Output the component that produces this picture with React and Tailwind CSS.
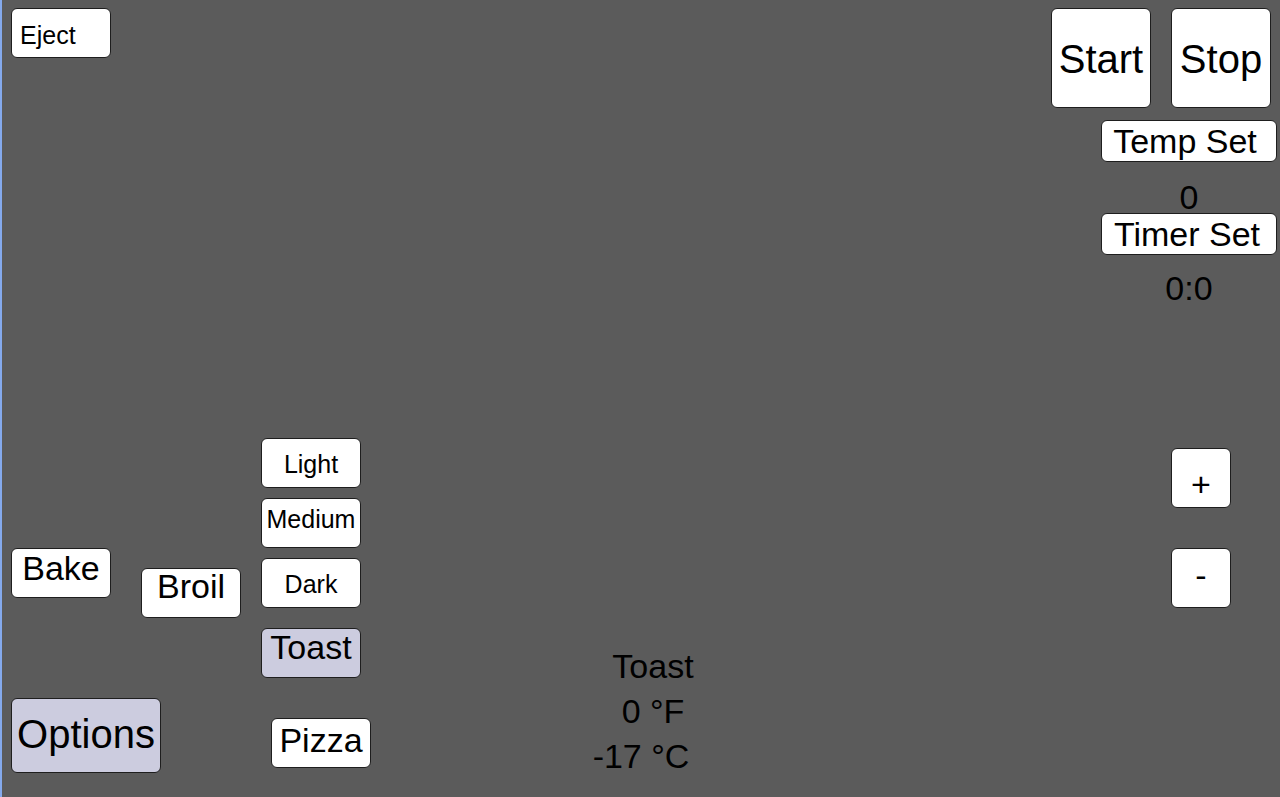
import React from "react";

const Btn = ({ className = "", children }) => (
  <button
    className={`flex shrink-0 justify-center items-start border border-[#1e1e1e] rounded-[6px] text-black ${className}`}
  >
    <span className="whitespace-nowrap">{children}</span>
  </button>
);

const App = () => {
  return (
    <div className="flex h-[797px] w-full overflow-hidden bg-[#5b5b5b] border-l-2 border-[#84a9ec] text-black font-['Liberation_Sans',Arial,sans-serif]">
      {/* left side: eject + cooking modes */}
      <div className="flex w-[378px] shrink-0 flex-col">
        <Btn className="ml-[9px] mt-[8px] h-[50px] w-[100px] bg-white !justify-start pl-[8px] pt-[12px] text-[25px] leading-[28px]">
          Eject
        </Btn>

        <div className="mt-[380px] flex h-[240px] items-start">
          <Btn className="ml-[9px] mt-[110px] h-[50px] w-[100px] bg-white pt-[4px] text-[34px] leading-[30px]">
            Bake
          </Btn>
          <Btn className="ml-[30px] mt-[130px] h-[50px] w-[100px] bg-white pt-[2px] text-[34px] leading-[30px]">
            Broil
          </Btn>
          <div className="ml-[20px] flex flex-col">
            <Btn className="h-[50px] w-[100px] bg-white pt-[11px] text-[25px] leading-[28px]">
              Light
            </Btn>
            <Btn className="mt-[10px] h-[50px] w-[100px] bg-white pt-[6px] text-[25px] leading-[28px]">
              Medium
            </Btn>
            <Btn className="mt-[10px] h-[50px] w-[100px] bg-white pt-[11px] text-[25px] leading-[28px]">
              Dark
            </Btn>
            <Btn className="mt-[20px] h-[50px] w-[100px] bg-[#ccccdf] pt-[3px] text-[34px] leading-[30px]">
              Toast
            </Btn>
          </div>
        </div>

        <div className="mt-[20px] flex items-start">
          <Btn className="ml-[9px] h-[75px] w-[150px] bg-[#ccccdf] pt-[12px] text-[40px] leading-[46px]">
            Options
          </Btn>
          <Btn className="ml-[110px] mt-[20px] h-[50px] w-[100px] bg-white pt-[6px] text-[34px] leading-[30px]">
            Pizza
          </Btn>
        </div>
      </div>

      {/* middle: status readout */}
      <div className="flex flex-1 flex-col justify-end pb-[22px]">
        <div className="ml-[173px] flex w-[200px] flex-col items-center gap-[7px] text-[34px] leading-[38px]">
          <div>Toast</div>
          <div>0 °F</div>
          <div className="pr-[24px]">-17 °C</div>
        </div>
      </div>

      {/* right side: start/stop, setters, +/- */}
      <div className="flex w-[229px] shrink-0 flex-col pt-[8px]">
        <div className="flex">
          <Btn className="h-[100px] w-[100px] bg-white pt-[27px] text-[40px] leading-[46px]">
            Start
          </Btn>
          <Btn className="ml-[20px] h-[100px] w-[100px] bg-white pt-[27px] text-[40px] leading-[46px]">
            Stop
          </Btn>
        </div>

        <div className="ml-[50px] mt-[12px] flex w-[176px] flex-col items-center text-[34px] leading-[38px]">
          <Btn className="h-[42px] w-full bg-white pt-[5px] pr-[8px] text-[34px] leading-[30px]">
            Temp Set
          </Btn>
          <div className="mt-[16px] h-[35px]">0</div>
          <Btn className="h-[42px] w-full bg-white pt-[5px] pr-[4px] text-[34px] leading-[30px]">
            Timer Set
          </Btn>
          <div className="mt-[14px] h-[38px]">0:0</div>
        </div>

        <div className="ml-[120px] flex flex-col">
          <Btn className="mt-[141px] h-[60px] w-[60px] bg-white pt-[20px] text-[34px] leading-[30px]">
            +
          </Btn>
          <Btn className="mt-[40px] h-[60px] w-[60px] bg-white pt-[11px] text-[34px] leading-[30px]">
            -
          </Btn>
        </div>
      </div>
    </div>
  );
};

export default App;
